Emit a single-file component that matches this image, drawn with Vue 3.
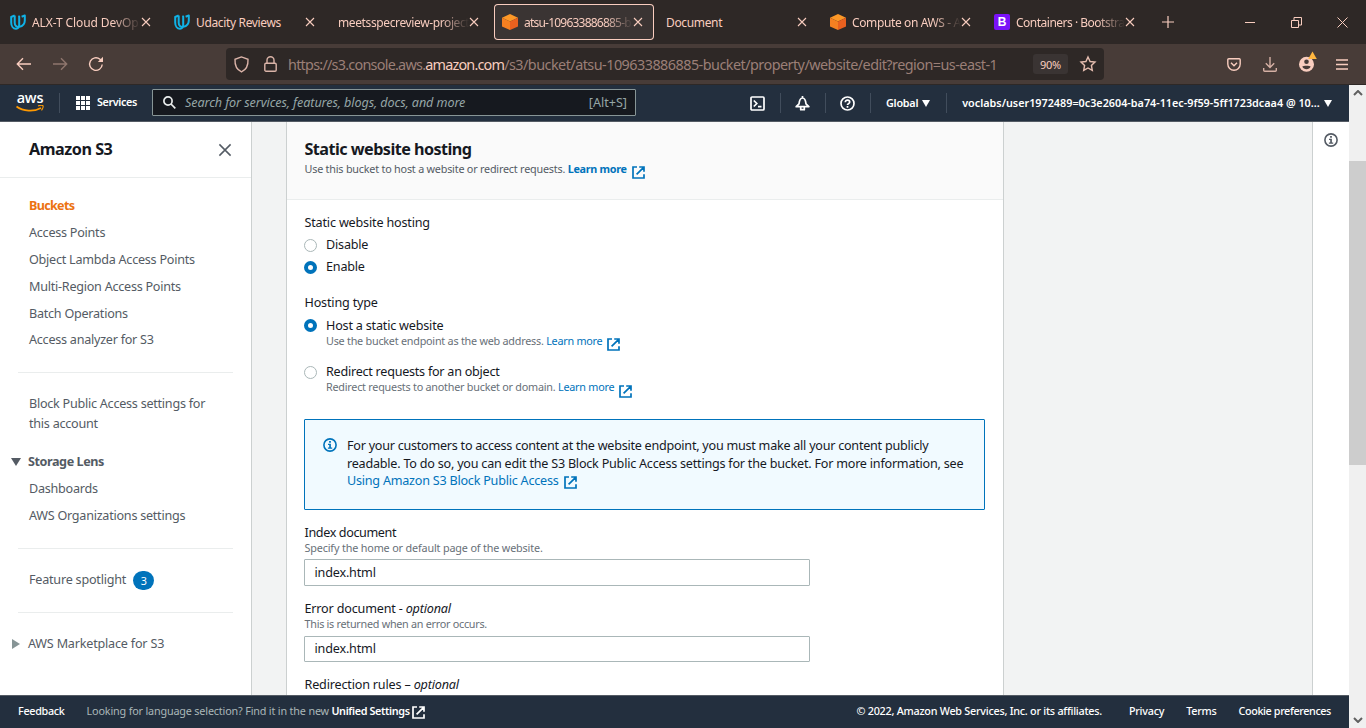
<script setup>
const tabs = [
  { title: 'ALX-T Cloud DevOp', icon: 'udacity', cls: 't-alx' },
  { title: 'Udacity Reviews', icon: 'udacity', cls: 't-plain' },
  { title: 'meetsspecreview-project', icon: '', cls: 't-meet' },
  { title: 'atsu-109633886885-b', icon: 'cube', cls: 't-atsu', active: true },
  { title: 'Document', icon: '', cls: 't-plain' },
  { title: 'Compute on AWS - A', icon: 'cube', cls: 't-comp' },
  { title: 'Containers · Bootstra', icon: 'boot', cls: 't-boot' },
]
const links = ['Access Points', 'Object Lambda Access Points', 'Multi-Region Access Points', 'Batch Operations', 'Access analyzer for S3']
</script>

<template>
  <div class="window">
    <svg class="defs" aria-hidden="true">
      <symbol id="ext" viewBox="0 0 13 13">
        <path d="M5 1H1v11h11V8.2M7.2 1H12v4.8M11.7 1.3 4.6 8.4" fill="none" stroke="currentColor" stroke-width="1.7" />
      </symbol>
      <symbol id="info" viewBox="0 0 14 14">
        <circle cx="7" cy="7" r="6.1" fill="none" stroke="currentColor" stroke-width="1.6" />
        <path d="M6.1 3h1.8v1.7H6.1zM5 5.8h2.9v3.6h1.3v1.3H4.9V9.4h1.3V7.1H5z" fill="currentColor" />
      </symbol>
      <symbol id="x" viewBox="0 0 10 10">
        <path d="M1 1l8 8M9 1L1 9" fill="none" stroke="currentColor" stroke-width="1.1" />
      </symbol>
      <symbol id="udacity" viewBox="0 0 16 16">
        <path d="M4.700 1.400 1.200 3v5.400c0 3.500 2 6.200 4.700 6.300 2.300.1 3.300-1.600 3.300-4V2.500l-.9.400M4.700 1.400v7.300c0 3 1.900 4.700 4.500 4.100 3.300-.7 5.600-3.200 5.600-6.400V1.400L11.600 2.700" fill="none" stroke="#10b2e6" stroke-width="2" stroke-linejoin="round" />
      </symbol>
      <symbol id="cube" viewBox="0 0 16 16">
        <path d="M8 0l8 3.700L8 7.400 0 3.700z" fill="#fd9827" />
        <path d="M0 3.700l8 3.700V16l-8-3.500z" fill="#f68021" />
        <path d="M16 3.700L8 7.400V16l8-3.500z" fill="#e9601f" />
      </symbol>
    </svg>

    <header class="tabbar">
      <div v-for="t in tabs" :key="t.title" class="tab" :class="{ active: t.active }">
        <span v-if="t.icon === 'boot'" class="boot">B</span>
        <svg v-else-if="t.icon" class="fav"><use :href="'#' + t.icon" /></svg>
        <span class="tab-title" :class="t.cls">{{ t.title }}</span>
        <svg class="tab-x"><use href="#x" /></svg>
      </div>
      <svg class="plus" viewBox="0 0 12 12"><path d="M6 0v12M0 6h12" stroke="currentColor" stroke-width="1.2" /></svg>
      <div class="win-controls">
        <svg width="11" height="11"><path d="M0 5.500h10" stroke="currentColor" /></svg>
        <svg width="11" height="11"><path d="M.5 3.500h7v7h-7zM3 3V.5h7.500V8H8" fill="none" stroke="currentColor" /></svg>
        <svg width="11" height="11"><path d="M.5.5l10 10M10.500.5l-10 10" stroke="currentColor" /></svg>
      </div>
    </header>

    <div class="toolbar">
      <svg class="nav back" viewBox="0 0 16 14"><path d="M15 7H1.500M7 1.300L1.300 7 7 12.700" /></svg>
      <svg class="nav fwd" viewBox="0 0 16 14"><path d="M1 7h13.500M9 1.300L14.700 7 9 12.700" /></svg>
      <svg class="nav reload" viewBox="0 0 16 16"><path d="M14.200 8.500A6.300 6.300 0 1 1 12 3.300l1.600 1.500" /><path d="M15 .8v5.200H9.800z" fill="currentColor" stroke="none" /></svg>
      <div class="urlbar">
        <svg class="shield" viewBox="0 0 15 17"><path d="M7.500.9L1 3.300c-.3 5.300 1.400 10.300 6.500 12.600C12.600 13.600 14.300 8.600 14 3.300z" /></svg>
        <svg class="lock" viewBox="0 0 13 16"><rect x=".8" y="7.200" width="11.400" height="8" rx="1.200" /><path d="M3 7V4.300a3.500 3.500 0 0 1 7 0V7" /></svg>
        <span class="url"><span class="pre">https://s3.console.aws.</span><b>amazon.com</b>/s3/bucket/atsu-109633886885-bucket/property/website/edit?region=us-east-1</span>
        <span class="zoom">90%</span>
        <svg class="star" viewBox="0 0 16 16"><path d="M8 1l2.100 4.500 4.900.6-3.600 3.400.9 4.900L8 12l-4.300 2.400.9-4.900L1 6.100l4.900-.6z" /></svg>
      </div>
      <div class="tools">
        <svg class="pocket" viewBox="0 0 14 13"><path d="M1.800.8h10.400c.6 0 1 .4 1 1v4.300a6.200 6.200 0 0 1-12.400 0V1.800c0-.6.4-1 1-1zM4 4.800l3 2.900 3-2.900" /></svg>
        <svg class="dl" viewBox="0 0 14 15"><path d="M7 0v10.200M2.800 6.200L7 10.400l4.200-4.200M.7 11v2.200c0 .6.400 1 1 1h10.600c.6 0 1-.4 1-1V11" /></svg>
        <svg class="acct" viewBox="0 0 18 20"><circle cx="7.500" cy="12.300" r="7.500" fill="#f9cdbf" /><circle cx="7.500" cy="9.800" r="2.300" fill="#483c38" /><path d="M3.300 14.600c1-1.200 7.400-1.200 8.400 0-.8 1.700-2.300 2.700-4.200 2.700s-3.400-1-4.200-2.700z" fill="#483c38" /><path d="M13.500-.5l4.300 7.500H9.200z" fill="#ffb63f" /></svg>
        <svg class="menu" viewBox="0 0 12 11"><path d="M0 1h12M0 5.500h12M0 10h12" /></svg>
      </div>
    </div>

    <div class="page">
      <div class="console">
        <nav class="awsnav">
          <div class="logo"><span>aws</span>
            <svg viewBox="0 0 28 8"><path d="M.5 1.500C7 6.500 18 7 25 3" fill="none" stroke="#f90" stroke-width="1.700" /><path d="M22 .9c2-.6 4.300-.7 4.900-.2.500.6-.1 3-1.400 4.600" fill="none" stroke="#f90" stroke-width="1.200" /></svg>
          </div>
          <i class="sep s1"></i>
          <svg class="grid" viewBox="0 0 14 14"><path d="M0 2h4m1 0h4m1 0h4M0 7h4m1 0h4m1 0h4M0 12h4m1 0h4m1 0h4" stroke="#fff" stroke-width="4" /></svg>
          <span class="services">Services</span>
          <div class="search">
            <svg viewBox="0 0 13 13"><circle cx="5" cy="5" r="4.100" /><path d="M8 8l4.300 4.300" /></svg>
            <span class="ph">Search for services, features, blogs, docs, and more</span>
            <span class="alt">[Alt+S]</span>
          </div>
          <div class="navright">
            <svg class="ic" viewBox="0 0 15 15"><rect x="1" y="1" width="13" height="13" rx="1" /><path d="M3.800 4.500l3 3-3 3M8 10.700h3.500" /></svg>
            <i class="sep"></i>
            <svg class="ic" viewBox="0 0 15 15"><path d="M7.500 0v2M1.200 10.700L4 7.900C4.400 4 5.300 2 7.500 2S10.600 4 11 7.900l2.800 2.800zM5.700 11.300v2.400h3.600v-2.400" stroke-linejoin="round" /></svg>
            <i class="sep"></i>
            <svg class="ic" viewBox="0 0 15 15"><circle cx="7.500" cy="7.500" r="6.500" /><path d="M5.300 6.200c0-3 4.400-2.700 4.400-.2 0 1.600-2.200 1.600-2.200 3M7.500 10v1.700" /></svg>
            <i class="sep"></i>
            <span class="global">Global</span><i class="caret"></i>
            <i class="sep"></i>
            <span class="user">voclabs/user1972489=0c3e2604-ba74-11ec-9f59-5ff1723dcaa4 @ 10...</span><i class="caret"></i>
          </div>
        </nav>

        <div class="content">
          <aside class="side">
            <div class="side-head"><span>Amazon S3</span><svg><use href="#x" /></svg></div>
            <ul class="links">
              <li class="current">Buckets</li>
              <li v-for="l in links" :key="l">{{ l }}</li>
            </ul>
            <hr>
            <p class="block">Block Public Access settings for<br>this account</p>
            <div class="group"><i class="down"></i><b>Storage Lens</b></div>
            <ul class="links lens">
              <li>Dashboards</li>
              <li>AWS Organizations settings</li>
            </ul>
            <hr class="hr2">
            <div class="feature"><span class="spot">Feature spotlight</span><span class="badge">3</span></div>
            <hr class="hr3">
            <div class="group market"><i class="right"></i><span>AWS Marketplace for S3</span></div>
          </aside>

          <main class="main">
            <section class="card">
              <div class="card-head">
                <h2>Static website hosting</h2>
                <p class="desc dark d1">Use this bucket to host a website or redirect requests. <b class="a">Learn more</b><svg class="ext"><use href="#ext" /></svg></p>
              </div>
              <div class="card-body">
                <p class="label">Static website hosting</p>
                <div class="opt opt-a"><i class="radio"></i>Disable</div>
                <div class="opt"><i class="radio on"></i>Enable</div>
                <p class="label l2">Hosting type</p>
                <div class="opt opt-b"><i class="radio on"></i>Host a static website</div>
                <p class="desc ind">Use the bucket endpoint as the web address. <span class="a">Learn more</span><svg class="ext"><use href="#ext" /></svg></p>
                <div class="opt opt-c"><i class="radio"></i>Redirect requests for an object</div>
                <p class="desc ind">Redirect requests to another bucket or domain. <span class="a">Learn more</span><svg class="ext low"><use href="#ext" /></svg></p>
                <div class="alert">
                  <svg><use href="#info" /></svg>
                  <div class="alert-text">
                    <div class="al1">For your customers to access content at the website endpoint, you must make all your content publicly</div>
                    <div class="al2">readable. To do so, you can edit the S3 Block Public Access settings for the bucket. For more information, see</div>
                    <div class="al3 a">Using Amazon S3 Block Public Access<svg class="ext"><use href="#ext" /></svg></div>
                  </div>
                </div>
                <p class="label l3 idx">Index document</p>
                <p class="desc spec">Specify the home or default page of the website.</p>
                <div class="field">index.html</div>
                <p class="label l3">Error document - <em>optional</em></p>
                <p class="desc err">This is returned when an error occurs.</p>
                <div class="field f2">index.html</div>
                <p class="label l3">Redirection rules – <em>optional</em></p>
              </div>
            </section>
          </main>
          <div class="help"><svg><use href="#info" /></svg></div>
        </div>

        <footer class="footer">
          <span class="fb">Feedback</span>
          <span class="lang">Looking for language selection? Find it in the new</span>
          <span class="uni">Unified Settings</span><svg class="fext"><use href="#ext" /></svg>
          <span class="copy">© 2022, Amazon Web Services, Inc. or its affiliates.</span>
          <span class="priv">Privacy</span>
          <span class="terms">Terms</span>
          <span class="cookie">Cookie preferences</span>
        </footer>
      </div>
      <div class="scroll">
        <svg viewBox="0 0 10 6"><path d="M1 5l4-4 4 4" /></svg>
        <div class="thumb"></div>
        <svg class="dn" viewBox="0 0 10 6"><path d="M1 1l4 4 4-4" /></svg>
      </div>
    </div>
  </div>
</template>

<style>
html, body { margin: 0; overflow: hidden; }
</style>

<style scoped>
* { box-sizing: border-box; }
.window { width: 1366px; height: 728px; overflow: hidden; display: flex; flex-direction: column; font-family: "Noto Sans", sans-serif; font-size: 12.6px; color: #16191f; white-space: nowrap; }
.defs { position: absolute; width: 0; height: 0; }
svg { display: block; flex: none; }
p, h2, ul { margin: 0; padding: 0; list-style: none; }

.tabbar { height: 44px; flex: none; background: #2e2826; color: #f9cdbf; display: flex; align-items: center; padding-left: 2px; gap: 4px; font-size: 12px; }
.tab { width: 160px; height: 36px; border-radius: 4px; padding: 0 11px 0 8px; display: flex; align-items: center; }
.tab.active { background: #3a3433; box-shadow: inset 0 0 0 1px #f9cdbf; }
.fav { width: 16px; height: 16px; margin-right: 6px; }
.tab-title { flex: 1; overflow: hidden; line-height: 18px; letter-spacing: -.35px; margin-top: 1px; -webkit-mask-image: linear-gradient(90deg, #000 calc(100% - 28px), transparent); mask-image: linear-gradient(90deg, #000 calc(100% - 28px), transparent); }
.t-plain { -webkit-mask-image: none; mask-image: none; }
.t-alx { letter-spacing: -.1px; }
.t-meet { letter-spacing: -.38px; }
.t-atsu { letter-spacing: -.78px; }
.t-comp { letter-spacing: -.38px; }
.t-boot { letter-spacing: -.5px; }
.tab-x { width: 10px; height: 10px; }
.boot { width: 16px; height: 16px; margin-right: 6px; border-radius: 2px; background: #7a12f8; color: #fff; font: bold 12px/16px "Liberation Sans", sans-serif; text-align: center; }
.plus { width: 12px; height: 12px; margin-left: 12px; }
.win-controls { margin-left: auto; display: flex; gap: 35px; padding-right: 18px; }

.toolbar { height: 41px; flex: none; background: #483c38; border-bottom: 1px solid #2e2826; color: #f9cdbf; display: flex; align-items: center; }
.toolbar svg { fill: none; stroke: currentColor; stroke-width: 1.4; overflow: visible; }
.back { width: 16px; height: 14px; margin-left: 16px; }
.fwd { width: 16px; height: 14px; margin-left: 20px; opacity: .4; }
.reload { width: 16px; height: 16px; margin-left: 20px; }
.urlbar { width: 878px; height: 32px; margin-left: 122px; border-radius: 4px; background: #2e2826; display: flex; align-items: center; padding-left: 8px; }
.shield { width: 15px; height: 17px; opacity: .85; }
.lock { width: 13px; height: 16px; margin-left: 15px; opacity: .85; }
.url { width: 745px; margin: 2px 0 0 11px; font-size: 14.4px; letter-spacing: -.53px; color: #9b7f77; line-height: 20px; }
.url b { font-weight: 400; color: #f9cdbf; letter-spacing: -.8px; }
.url .pre { letter-spacing: -.75px; }
.zoom { width: 35px; height: 20px; border-radius: 3px; background: #3a3433; font-size: 11px; line-height: 21px; text-align: center; letter-spacing: -.3px; }
.star { width: 16px; height: 16px; margin-left: 12px; opacity: .9; }
.tools { margin-left: auto; display: flex; align-items: center; padding-right: 18px; }
.pocket { width: 14px; height: 13px; }
.dl { width: 14px; height: 15px; margin-left: 22px; opacity: .8; }
.toolbar .acct { width: 18px; height: 20px; margin: -5px 0 0 22px; stroke: none; }
.menu { width: 12px; height: 11px; margin-left: 19px; }

.page { flex: 1; display: flex; min-height: 0; }
.console { width: 1349px; display: flex; flex-direction: column; }
.awsnav { height: 37px; flex: none; background: #232f3e; border-bottom: 1px solid #545b64; color: #fff; display: flex; align-items: center; padding-left: 16px; font-size: 10.8px; }
.logo { width: 28px; height: 20px; margin-top: -1px; }
.logo span { display: block; font: 600 14.5px/9px "Open Sans", sans-serif; letter-spacing: -.2px; text-align: center; }
.logo svg { width: 28px; height: 8px; margin-top: 3px; }
.sep { width: 1px; height: 20px; background: #414d5c; flex: none; }
.s1 { margin-left: 15px; }
.grid { width: 14px; height: 14px; margin-left: 16px; }
.services { width: 62px; padding: 0 0 3px 7px; font-weight: 600; letter-spacing: -.38px; }
.search { width: 484px; height: 27px; margin-top: -1px; background: #16191f; border: 1px solid #879596; border-radius: 1px; display: flex; align-items: center; padding: 0 8px 0 10px; color: #95a5a6; font-size: 12.6px; }
.search svg { width: 13px; height: 13px; fill: none; stroke: #eaeded; stroke-width: 1.7; margin-right: 9px; }
.ph { font-style: italic; flex: 1; letter-spacing: -.09px; }
.navright { margin-left: 114px; display: flex; align-items: center; }
.ic { width: 15px; height: 15px; fill: none; stroke: #fff; stroke-width: 1.7; margin: 0 15px 0 14px; }
.navright .ic:first-child { margin-left: 0; }
.global { margin-left: 15px; padding-bottom: 1px; font-weight: 600; letter-spacing: -.25px; }
.user { margin-left: 15px; padding-bottom: 1px; font-weight: 600; letter-spacing: 0; }
.caret { border: 4px solid transparent; border-top: 7px solid #fff; border-bottom: 0; margin-left: 4px; }
.caret + .sep { margin-left: 16px; }

.content { flex: 1; display: flex; min-height: 0; background: #f2f3f3; }
.side { width: 252px; background: #fff; border-right: 1px solid #ccd0d0; color: #545b64; letter-spacing: -.25px; }
.side-head { height: 56px; border-bottom: 1px solid #eaeded; display: flex; align-items: center; justify-content: space-between; padding: 0 19px 0 29px; font-size: 16.2px; font-weight: 700; color: #16191f; letter-spacing: -.48px; }
.side-head span { padding-bottom: 1px; }
.side-head svg { width: 14px; height: 14px; color: #545b64; }
.links { padding: 14px 0 0 29px; }
.links li { height: 27px; line-height: 27px; }
.links li:last-child { height: 26px; line-height: 25px; }
.links .current { color: #ec7211; font-weight: 700; letter-spacing: -.7px; }
hr { width: 215px; height: 1px; border: 0; background: #eaeded; margin: 19px 0 0 18px; }
.block { padding: 21px 0 0 29px; line-height: 20px; }
.group { display: flex; align-items: center; height: 18px; margin-top: 18px; padding-left: 11px; }
.group b { margin-left: 7px; letter-spacing: -.42px; }
.down { border: 5px solid transparent; border-top: 8px solid #545b64; border-bottom: 0; margin-top: 1px; }
.right { border: 5px solid transparent; border-left: 8px solid #879596; border-right: 0; margin: 1px 0 0 1px; }
.group span { margin-left: 8px; letter-spacing: -.2px; }
.links.lens { padding-top: 5px; }
.lens li:last-child { height: 27px; line-height: 27px; }
.hr2 { margin-top: 19px; }
.feature { height: 20px; margin: 21px 0 0 29px; display: flex; align-items: center; }
.spot { padding-bottom: 1px; letter-spacing: -.22px; }
.badge { width: 21px; height: 19px; border-radius: 10px; background: #0073bb; color: #fff; font-size: 10.8px; line-height: 19px; text-align: center; margin: 1px 0 0 7px; }
.hr3 { margin-top: 22px; }
.market { margin-top: 21px; }

.main { width: 1061px; border-right: 1px solid #ccd0d0; padding-left: 34px; overflow: hidden; }
.card { width: 718px; height: 100%; background: #fff; border: solid #ccd0d0; border-width: 0 1px; }
.card-head { height: 78px; background: #fafafa; border-bottom: 1px solid #eaeded; padding: 16px 0 0 17.5px; }
h2 { font-size: 16.2px; line-height: 22px; font-weight: 700; letter-spacing: -.55px; }
.desc { height: 16px; font-size: 10.8px; line-height: 16px; color: #687078; margin-top: -1px; display: flex; white-space: pre; letter-spacing: -.235px; }
.d1 { margin-top: 1px; letter-spacing: -.21px; }
.d1 .a { letter-spacing: -.3px; }
.spec { letter-spacing: -.155px; }
.err { letter-spacing: -.27px; }
.dark { color: #545b64; }
.a { color: #0073bb; }
.ext { width: 13px; height: 13px; margin: 4px 0 0 6px; color: #0073bb; }
.desc .ext { margin: 5px 0 0 5px; }
.desc .ext.low { margin-top: 6px; }
.card-body { padding: 13px 0 0 17.5px; }
.label { height: 18px; line-height: 20px; letter-spacing: -.18px; }
.idx { letter-spacing: -.38px; }
.l2 { margin-top: 16px; }
.l3 { margin-top: 13px; }
.opt { height: 22px; display: flex; align-items: center; letter-spacing: -.2px; }
.opt-a { margin-top: 2px; }
.opt-b { height: 18px; margin-top: 5px; }
.opt-c { height: 18px; margin-top: 13px; letter-spacing: -.25px; }
.radio { width: 13px; height: 13px; border-radius: 50%; border: 1px solid #aab7b8; margin: 2px 9px 0 -.5px; }
.radio.on { border: 4px solid #0073bb; }
.opt-b .radio { margin-top: 1px; }
.ind { padding-left: 21.5px; }
.alert { width: 681px; height: 91px; margin: 24px 0 0 -.5px; background: #f1faff; border: 1px solid #0073bb; border-radius: 1px; display: flex; padding: 16px 0 0 18px; line-height: 18px; }
.alert > svg { width: 14px; height: 14px; color: #0073bb; margin: 2px 10px 0 0; }
.alert-text { letter-spacing: -.23px; }
.al1, .al2 { height: 18px; line-height: 20px; }
.al1 { letter-spacing: -.25px; }
.al2 { letter-spacing: -.225px; }
.al3 { display: flex; }
.field { width: 506px; height: 27px; margin: 3px 0 0 -.5px; border: 1px solid #aab7b8; border-radius: 1px; line-height: 25px; padding-left: 9.5px; letter-spacing: -.18px; }
.f2 { height: 26px; margin-top: 4px; line-height: 24px; }
.help { width: 36px; background: #fff; padding: 11px 0 0 11px; color: #545b64; }
.help svg { width: 14px; height: 14px; }

.footer { height: 33px; flex: none; background: #232f3e; border-top: 1px solid #545b64; color: #fff; display: flex; align-items: center; padding: 0 18px 3px; font-size: 10.8px; letter-spacing: -.25px; font-weight: 500; }
.fb { letter-spacing: -.3px; }
.lang { margin-left: 22px; color: #aab7b8; font-weight: 400; letter-spacing: -.17px; }
.uni { margin-left: 2.5px; font-weight: 600; letter-spacing: -.36px; }
.fext { width: 13px; height: 13px; margin: 3px 0 0 2px; }
.copy { margin-left: auto; }
.priv { margin-left: 27px; }
.terms { margin-left: 22px; }
.cookie { margin-left: 22px; letter-spacing: -.38px; }

.scroll { width: 17px; background: #f0f0f0; display: flex; flex-direction: column; align-items: center; }
.scroll svg { width: 10px; height: 6px; margin-top: 5px; fill: none; stroke: #606060; stroke-width: 2; }
.thumb { width: 17px; height: 304px; margin-top: 65px; background: #cdcdcd; }
.scroll .dn { margin: auto 0 5px; }
</style>
